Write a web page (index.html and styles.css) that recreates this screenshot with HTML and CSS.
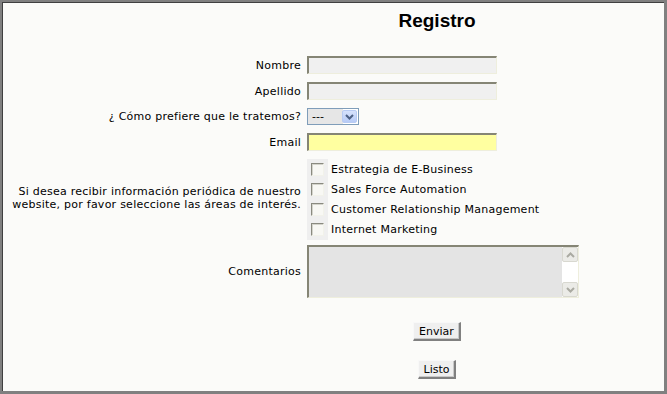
FILE: index.html
```html
<!DOCTYPE html>
<html lang="es">
<head>
    <meta charset="UTF-8">
    <title>Registro</title>
    <link rel="stylesheet" href="styles.css">
</head>
<body>
    <div class="frame">
        <h1 class="title">Registro</h1>
        <form class="form">
            <label class="label" for="nombre">Nombre</label>
            <input class="field" type="text" id="nombre">

            <label class="label" for="apellido">Apellido</label>
            <input class="field" type="text" id="apellido">

            <label class="label" for="trato">¿ Cómo prefiere que le tratemos?</label>
            <span class="select-wrap">
                <select class="select" id="trato">
                    <option>---</option>
                    <option>Sr.</option>
                    <option>Sra.</option>
                </select>
                <span class="select-btn">
                    <svg width="9" height="6" viewBox="0 0 9 6"><path d="M1 1 L4.5 4.5 L8 1" fill="none" stroke="#4d6185" stroke-width="2"/></svg>
                </span>
            </span>

            <label class="label" for="email">Email</label>
            <input class="field field-email" type="text" id="email">

            <p class="label">Si desea recibir información periódica de nuestro<br>website, por favor seleccione las áreas de interés.</p>
            <div class="checks">
                <label class="check-row"><input class="check" type="checkbox"> Estrategia de E-Business</label>
                <label class="check-row"><input class="check" type="checkbox"> Sales Force Automation</label>
                <label class="check-row"><input class="check" type="checkbox"> Customer Relationship Management</label>
                <label class="check-row"><input class="check" type="checkbox"> Internet Marketing</label>
            </div>

            <label class="label" for="comentarios">Comentarios</label>
            <span class="area-wrap">
                <textarea class="area" id="comentarios"></textarea>
                <span class="scroll">
                    <span class="scroll-btn">
                        <svg width="9" height="6" viewBox="0 0 9 6"><path d="M1 5 L4.5 1.5 L8 5" fill="none" stroke="#aaaaa2" stroke-width="2"/></svg>
                    </span>
                    <span class="scroll-btn">
                        <svg width="9" height="6" viewBox="0 0 9 6"><path d="M1 1 L4.5 4.5 L8 1" fill="none" stroke="#aaaaa2" stroke-width="2"/></svg>
                    </span>
                </span>
            </span>
        </form>
        <div class="actions">
            <button class="btn" type="button">Enviar</button>
            <button class="btn" type="button">Listo</button>
        </div>
    </div>
</body>
</html>
```

FILE: styles.css
```css
html, body {
    margin: 0;
    padding: 0;
}
body {
    font-family: "DejaVu Sans", Verdana, sans-serif;
    font-size: 11px;
    letter-spacing: 0.25px;
    color: #000;
    background: #fbfbf9;
}
.frame {
    width: 667px;
    height: 394px;
    box-sizing: border-box;
    border-style: solid;
    border-color: #808080;
    border-width: 2px 3px 3px 2px;
    box-shadow: inset 1px 1px 0 #404040;
    background: #fbfbf9;
}
.title {
    margin: 8px 0 0 206px;
    width: 458px;
    text-align: center;
    font-family: "Liberation Sans", Arial, sans-serif;
    font-size: 19px;
    line-height: 21px;
    font-weight: bold;
    letter-spacing: 0;
}
.form {
    display: grid;
    grid-template-columns: 299px auto;
    column-gap: 6px;
    row-gap: 8px;
    align-items: center;
    justify-items: start;
    margin-top: 25px;
}
.label {
    justify-self: end;
    text-align: right;
    margin: 0;
    line-height: 13px;
}
.field {
    width: 190px;
    height: 18px;
    box-sizing: border-box;
    margin: 0;
    padding: 0 2px;
    font: inherit;
    border-style: solid;
    border-width: 2px 1px 1px 2px;
    border-color: #858575 #eeeedd #eeeedd #858575;
    background: #f0f0f0;
    outline: none;
}
.field-email {
    background: #ffffa0;
}
.select-wrap {
    position: relative;
    display: block;
    width: 52px;
    height: 17px;
    box-sizing: border-box;
    border: 1px solid #7f9db9;
    background: #fff;
}
.select {
    appearance: none;
    -webkit-appearance: none;
    display: block;
    width: 35px;
    height: 15px;
    margin: 0;
    border: none;
    padding: 0 0 0 4px;
    font: inherit;
    line-height: 15px;
    background: #e6e6e6;
    color: #000;
    outline: none;
}
.select-btn {
    position: absolute;
    top: 1px;
    right: 1px;
    width: 15px;
    height: 13px;
    box-sizing: border-box;
    border: 1px solid #b8cbf3;
    border-radius: 2px;
    background: linear-gradient(#d6e2fc, #b7cbf6);
    display: flex;
    align-items: center;
    justify-content: center;
}
.checks {
    display: flex;
    flex-direction: column;
    margin-bottom: -2px;
}
.check-row {
    display: flex;
    align-items: center;
    height: 20px;
    white-space: nowrap;
}
.check {
    appearance: none;
    -webkit-appearance: none;
    width: 13px;
    height: 13px;
    box-sizing: border-box;
    margin: 0 11px 0 0;
    border-style: solid;
    border-width: 1px;
    border-color: #8a8a80 #f2f2ea #f2f2ea #8a8a80;
    box-shadow: inset 1px 1px 0 #d4d4cc;
    background: #f8f8f4;
    outline: 4px solid #efefef;
    position: relative;
    left: 4px;
}
.area-wrap {
    position: relative;
    display: block;
    width: 272px;
    height: 53px;
}
.area {
    display: block;
    width: 272px;
    height: 53px;
    box-sizing: border-box;
    margin: 0;
    resize: none;
    overflow: hidden;
    font: inherit;
    border-style: solid;
    border-width: 2px 1px 1px 2px;
    border-color: #858575 #eeeedd #eeeedd #858575;
    background: #e4e4e4;
    outline: none;
}
.scroll {
    position: absolute;
    top: 2px;
    right: 1px;
    width: 16px;
    bottom: 1px;
    background: #fff;
    display: flex;
    flex-direction: column;
    justify-content: space-between;
}
.scroll-btn {
    height: 15px;
    box-sizing: border-box;
    border: 1px solid #d8d8d0;
    border-radius: 2px;
    background: #ebebe7;
    display: flex;
    align-items: center;
    justify-content: center;
}
.actions {
    margin-left: 206px;
    width: 458px;
    display: flex;
    flex-direction: column;
    align-items: center;
    gap: 19px;
    margin-top: 24px;
}
.btn {
    margin: 0;
    padding: 0 5px;
    height: 19px;
    font: inherit;
    color: #000;
    background: #efefef;
    border-style: solid;
    border-width: 1px 2px 2px 1px;
    border-color: #f8f8f8 #808080 #808080 #f8f8f8;
    box-shadow: inset -1px -1px 0 #c8c8c8;
    line-height: 15px;
}
```
